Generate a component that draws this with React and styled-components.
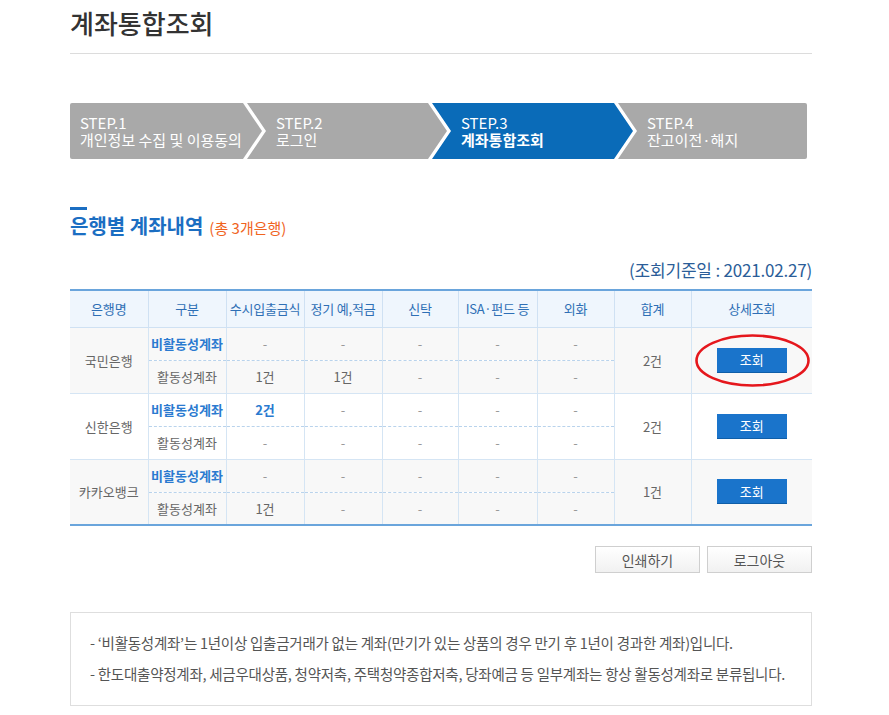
import React from "react";
import styled, { createGlobalStyle, css } from "styled-components";

const Global = createGlobalStyle`
  html, body { margin: 0; padding: 0; background: #fff; }
  body { font-family: "Noto Sans CJK KR", "Noto Sans", sans-serif; color: #333; }
  * { box-sizing: border-box; }
`;

const Page = styled.div`
  width: 742px;
  margin-left: 70px;
  padding-top: 7px;
`;

const Title = styled.h1`
  margin: 0;
  font-size: 26px;
  line-height: 32px;
  font-weight: 500;
  color: #333;
  padding-bottom: 14px;
  border-bottom: 1px solid #dcdcdc;
`;

const Steps = styled.div`
  display: flex;
  margin-top: 49px;
  width: 737px;
  height: 56px;
`;

const clipFor = (pos) => {
  if (pos === "first")
    return "polygon(0 0, calc(100% - 19px) 0, 100% 50%, calc(100% - 19px) 100%, 0 100%)";
  if (pos === "last")
    return "polygon(0 0, 100% 0, 100% 100%, 0 100%, 19px 50%)";
  return "polygon(0 0, calc(100% - 19px) 0, 100% 50%, calc(100% - 19px) 100%, 0 100%, 19px 50%)";
};

const Step = styled.div`
  flex: 0 0 ${(p) => p.$w}px;
  height: 56px;
  margin-left: ${(p) => (p.$pos === "first" ? 0 : -15)}px;
  background: ${(p) => (p.$active ? "#0a6bb8" : "#a9a9a9")};
  clip-path: ${(p) => clipFor(p.$pos)};
  border-radius: ${(p) => (p.$pos === "first" ? "2px 0 0 2px" : p.$pos === "last" ? "0 2px 2px 0" : "0")};
  color: #fff;
  display: flex;
  flex-direction: column;
  justify-content: center;
  padding-left: ${(p) => (p.$pos === "first" ? 10 : 29)}px;
  font-size: 15px;
  line-height: 17px;
  white-space: nowrap;
`;

const StepNo = styled.span`
  display: block;
  height: 17px;
`;

const StepName = styled.span`
  display: block;
  height: 17px;
  font-weight: ${(p) => (p.$active ? "bold" : "normal")};
`;

const Heading = styled.div`
  margin-top: 48px;
  display: flex;
  flex-direction: column;
  align-items: flex-start;
`;

const HeadBar = styled.div`
  width: 17px;
  height: 3px;
  background: #1b6ec2;
`;

const HeadTitle = styled.h2`
  margin: 3px 0 0;
  font-size: 20px;
  line-height: 26px;
  font-weight: bold;
  color: #1b6ec2;
`;

const HeadCount = styled.span`
  font-size: 15px;
  font-weight: normal;
  color: #f0641e;
  margin-left: 6px;
`;

const DateLine = styled.div`
  margin-top: 18px;
  text-align: right;
  font-size: 17px;
  line-height: 22px;
  color: #2b5d98;
  letter-spacing: -0.2px;
`;

const Table = styled.table`
  margin-top: 8px;
  width: 100%;
  border-collapse: collapse;
  table-layout: fixed;
  border-top: 2px solid #6aa5dc;
  border-bottom: 2px solid #6aa5dc;
`;

const Th = styled.th`
  height: 37px;
  padding: 0;
  background: #eff6fd;
  color: #2e6fb5;
  font-size: 13px;
  font-weight: normal;
  letter-spacing: -0.2px;
  white-space: nowrap;
  border-left: 1px solid #cfe1f3;
  border-bottom: 1px solid #cfe1f3;
  &:first-child { border-left: none; }
`;

const Td = styled.td`
  position: relative;
  height: 33px;
  padding: 0;
  text-align: center;
  font-size: 13px;
  color: ${(p) => (p.$strong ? "#2a7ad0" : p.$dim ? "#999" : "#666")};
  font-weight: ${(p) => (p.$strong ? "bold" : "normal")};
  background: ${(p) => (p.$shaded ? "#f8f8f8" : "#fff")};
  border-left: 1px solid #d5e5f4;
  border-bottom: ${(p) => (p.$dashed ? "1px dashed #b9d3ec" : "1px solid #d5e5f4")};
  white-space: nowrap;
  ${(p) =>
    p.$first &&
    css`
      border-left: none;
    `}
`;

const ViewButton = styled.button`
  width: 70px;
  height: 25px;
  border: none;
  border-bottom: 1px solid #0f5ea8;
  background: #1a74cb;
  color: #fff;
  font-family: inherit;
  font-size: 13px;
  padding: 0;
  cursor: pointer;
`;

const Circle = styled.svg`
  position: absolute;
  left: 3px;
  top: 6px;
  width: 115px;
  height: 53px;
  pointer-events: none;
  overflow: visible;
`;

const Actions = styled.div`
  display: flex;
  justify-content: flex-end;
  gap: 7px;
  margin-top: 20px;
`;

const GrayButton = styled.button`
  width: 105px;
  height: 27px;
  border: 1px solid #cfcfcf;
  background: linear-gradient(#ffffff, #f1f1f1);
  color: #555;
  font-family: inherit;
  font-size: 14px;
  padding: 0;
`;

const Notes = styled.div`
  margin-top: 39px;
  border: 1px solid #dedede;
  padding: 21px 19px 22px;
  display: flex;
  flex-direction: column;
  gap: 13px;
`;

const Note = styled.p`
  margin: 0;
  font-size: 14.5px;
  line-height: 18px;
  color: #555;
  letter-spacing: -0.25px;
  white-space: nowrap;
`;

const banks = [
  {
    name: "국민은행",
    total: "2건",
    inactive: ["-", "-", "-", "-", "-"],
    active: ["1건", "1건", "-", "-", "-"],
    shaded: true,
    highlight: true,
  },
  {
    name: "신한은행",
    total: "2건",
    inactive: ["2건", "-", "-", "-", "-"],
    active: ["-", "-", "-", "-", "-"],
    shaded: false,
  },
  {
    name: "카카오뱅크",
    total: "1건",
    inactive: ["-", "-", "-", "-", "-"],
    active: ["1건", "-", "-", "-", "-"],
    shaded: true,
  },
];

const headers = ["은행명", "구분", "수시입출금식", "정기 예,적금", "신탁", "ISA·펀드 등", "외화", "합계", "상세조회"];
const widths = [78, 78, 78, 78, 76, 79, 77, 77, 121];

export default function App() {
  return (
    <>
      <Global />
      <Page>
        <Title>계좌통합조회</Title>

        <Steps>
          <Step $pos="first" $w={192}>
            <StepNo>STEP.1</StepNo>
            <StepName>개인정보 수집 및 이용동의</StepName>
          </Step>
          <Step $pos="mid" $w={200}>
            <StepNo>STEP.2</StepNo>
            <StepName>로그인</StepName>
          </Step>
          <Step $pos="mid" $w={201} $active>
            <StepNo>STEP.3</StepNo>
            <StepName $active>계좌통합조회</StepName>
          </Step>
          <Step $pos="last" $w={189}>
            <StepNo>STEP.4</StepNo>
            <StepName>잔고이전·해지</StepName>
          </Step>
        </Steps>

        <Heading>
          <HeadBar />
          <HeadTitle>
            은행별 계좌내역<HeadCount>(총 3개은행)</HeadCount>
          </HeadTitle>
        </Heading>

        <DateLine>(조회기준일 : 2021.02.27)</DateLine>

        <Table>
          <colgroup>
            {widths.map((w, i) => (
              <col key={i} style={{ width: w }} />
            ))}
          </colgroup>
          <thead>
            <tr>
              {headers.map((h) => (
                <Th key={h}>{h}</Th>
              ))}
            </tr>
          </thead>
          <tbody>
            {banks.map((b) => (
              <React.Fragment key={b.name}>
                <tr>
                  <Td rowSpan={2} $first $shaded={b.shaded}>
                    {b.name}
                  </Td>
                  <Td $strong $dashed $shaded={b.shaded}>
                    비활동성계좌
                  </Td>
                  {b.inactive.map((v, i) => (
                    <Td key={i} $dashed $shaded={b.shaded} $strong={v !== "-"} $dim={v === "-"}>
                      {v}
                    </Td>
                  ))}
                  <Td rowSpan={2} $shaded={b.shaded}>
                    {b.total}
                  </Td>
                  <Td rowSpan={2} $shaded={b.shaded}>
                    <ViewButton>조회</ViewButton>
                    {b.highlight && (
                      <Circle viewBox="0 0 115 53">
                        <ellipse cx="57.5" cy="26.5" rx="56" ry="25" fill="none" stroke="#e5171d" strokeWidth="2.6" />
                      </Circle>
                    )}
                  </Td>
                </tr>
                <tr>
                  <Td $shaded={b.shaded}>활동성계좌</Td>
                  {b.active.map((v, i) => (
                    <Td key={i} $shaded={b.shaded} $dim={v === "-"}>
                      {v}
                    </Td>
                  ))}
                </tr>
              </React.Fragment>
            ))}
          </tbody>
        </Table>

        <Actions>
          <GrayButton>인쇄하기</GrayButton>
          <GrayButton>로그아웃</GrayButton>
        </Actions>

        <Notes>
          <Note>- ‘비활동성계좌’는 1년이상 입출금거래가 없는 계좌(만기가 있는 상품의 경우 만기 후 1년이 경과한 계좌)입니다.</Note>
          <Note>- 한도대출약정계좌, 세금우대상품, 청약저축, 주택청약종합저축, 당좌예금 등 일부계좌는 항상 활동성계좌로 분류됩니다.</Note>
        </Notes>
      </Page>
    </>
  );
}
